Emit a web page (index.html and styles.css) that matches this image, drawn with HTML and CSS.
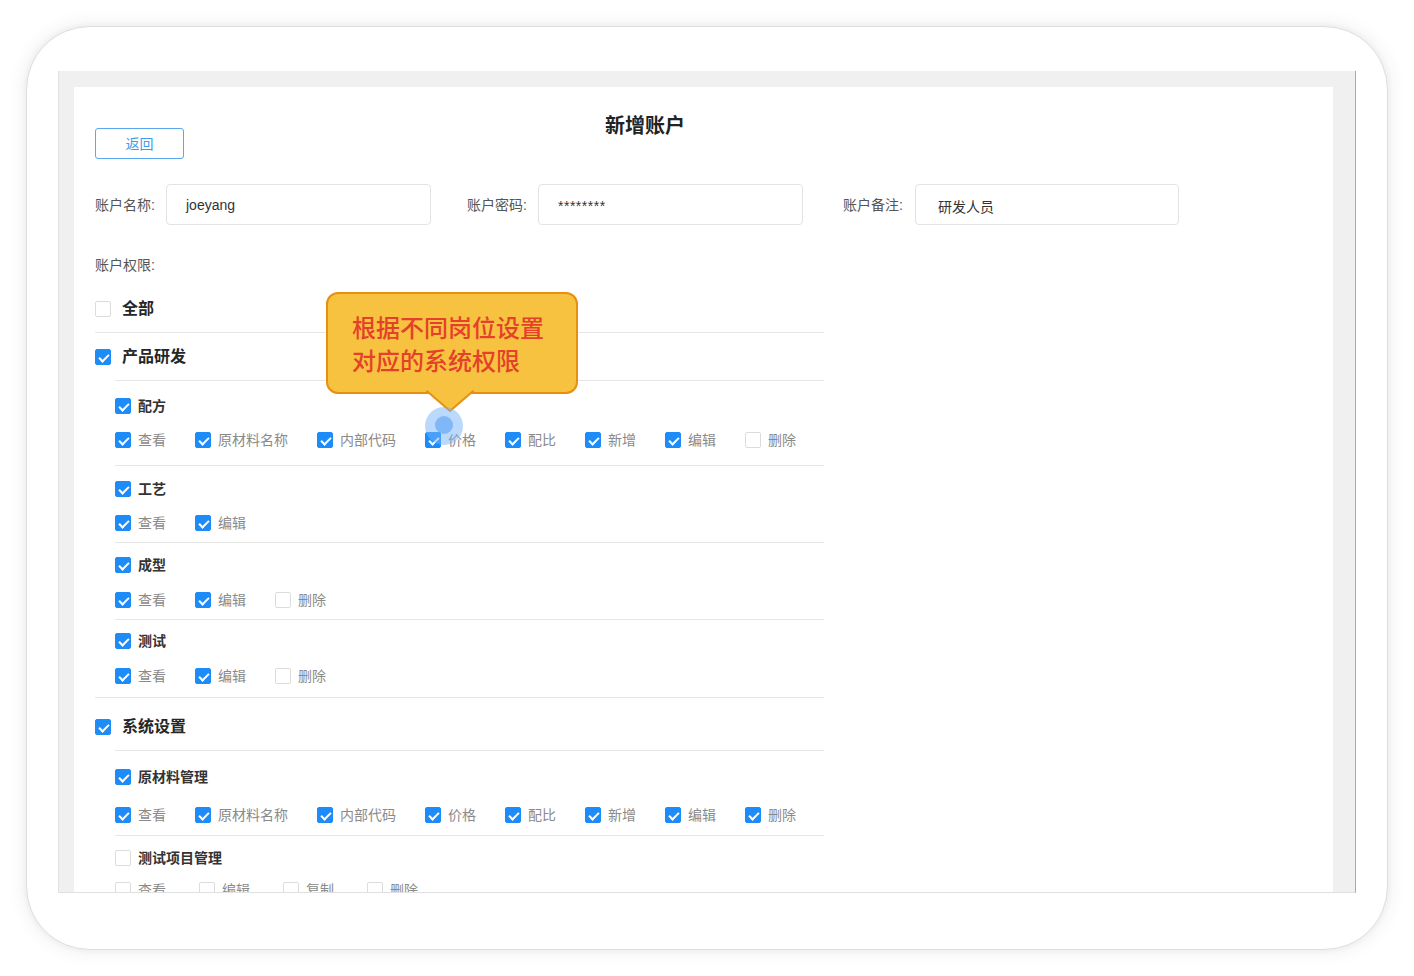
FILE: index.html
```html
<!DOCTYPE html>
<html lang="zh-CN">
<head>
<meta charset="utf-8">
<title>新增账户</title>
<link rel="stylesheet" href="styles.css">
</head>
<body>
<div class="device">
  <div class="screen">
    <div class="panel">
      <div class="head">
        <button class="btn-back">返回</button>
        <h1 class="title">新增账户</h1>
      </div>

      <div class="form">
        <div class="field"><label class="f-label">账户名称:</label><div class="input">joeyang</div></div>
        <div class="field f2"><label class="f-label">账户密码:</label><div class="input pwd">********</div></div>
        <div class="field f3"><label class="f-label">账户备注:</label><div class="input note">研发人员</div></div>
      </div>

      <div class="perm-label">账户权限:</div>

      <div class="perm">
        <div class="all-row">
          <span class="cb"></span><span class="lv1">全部</span>
          <div class="tip">根据不同岗位设置<br>对应的系统权限<svg class="tip-arrow" width="50" height="24" viewBox="0 0 50 24"><path d="M0 0 L25 21 L50 0 Z" fill="#f6c23f"/><path d="M1.5 0.8 L25 21 L48.5 0.8" fill="none" stroke="#e8900e" stroke-width="2" stroke-linejoin="round"/></svg></div>
          <span class="touch"><span class="touch-core"></span></span>
        </div>

        <div class="section">
          <div class="sec-head"><span class="cb on"></span><span class="lv1">产品研发</span></div>
          <div class="groups">
            <div class="group g-a">
              <div class="g-head"><span class="cb on"></span><span class="lv2">配方</span></div>
              <div class="opts">
                <span class="opt"><span class="cb on"></span>查看</span>
                <span class="opt"><span class="cb on"></span>原材料名称</span>
                <span class="opt"><span class="cb on"></span>内部代码</span>
                <span class="opt"><span class="cb on"></span>价格</span>
                <span class="opt"><span class="cb on"></span>配比</span>
                <span class="opt"><span class="cb on"></span>新增</span>
                <span class="opt"><span class="cb on"></span>编辑</span>
                <span class="opt"><span class="cb"></span>删除</span>
              </div>
            </div>
            <div class="group g-b">
              <div class="g-head"><span class="cb on"></span><span class="lv2">工艺</span></div>
              <div class="opts">
                <span class="opt"><span class="cb on"></span>查看</span>
                <span class="opt"><span class="cb on"></span>编辑</span>
              </div>
            </div>
            <div class="group g-c">
              <div class="g-head"><span class="cb on"></span><span class="lv2">成型</span></div>
              <div class="opts">
                <span class="opt"><span class="cb on"></span>查看</span>
                <span class="opt"><span class="cb on"></span>编辑</span>
                <span class="opt"><span class="cb"></span>删除</span>
              </div>
            </div>
            <div class="group g-d">
              <div class="g-head"><span class="cb on"></span><span class="lv2">测试</span></div>
              <div class="opts">
                <span class="opt"><span class="cb on"></span>查看</span>
                <span class="opt"><span class="cb on"></span>编辑</span>
                <span class="opt"><span class="cb"></span>删除</span>
              </div>
            </div>
          </div>
        </div>

        <div class="section sec-2">
          <div class="sec-head"><span class="cb on"></span><span class="lv1">系统设置</span></div>
          <div class="groups">
            <div class="group g-e">
              <div class="g-head"><span class="cb on"></span><span class="lv2">原材料管理</span></div>
              <div class="opts">
                <span class="opt"><span class="cb on"></span>查看</span>
                <span class="opt"><span class="cb on"></span>原材料名称</span>
                <span class="opt"><span class="cb on"></span>内部代码</span>
                <span class="opt"><span class="cb on"></span>价格</span>
                <span class="opt"><span class="cb on"></span>配比</span>
                <span class="opt"><span class="cb on"></span>新增</span>
                <span class="opt"><span class="cb on"></span>编辑</span>
                <span class="opt"><span class="cb on"></span>删除</span>
              </div>
            </div>
            <div class="group g-f">
              <div class="g-head"><span class="cb"></span><span class="lv2">测试项目管理</span></div>
              <div class="opts wide">
                <span class="opt"><span class="cb"></span>查看</span>
                <span class="opt"><span class="cb"></span>编辑</span>
                <span class="opt"><span class="cb"></span>复制</span>
                <span class="opt"><span class="cb"></span>删除</span>
              </div>
            </div>
          </div>
        </div>
      </div>
    </div>
  </div>
</div>
</body>
</html>
```

FILE: styles.css
```css
* { box-sizing: border-box; }

html, body {
  margin: 0;
  padding: 0;
  background: #fff;
}

body {
  width: 1414px;
  height: 976px;
  overflow: hidden;
  font-family: "Liberation Sans", "Noto Sans CJK SC", sans-serif;
  color: #333;
}

.device {
  margin: 26px 0 0 26px;
  width: 1362px;
  height: 924px;
  border: 1px solid #dedede;
  border-radius: 64px;
  background: #fff;
  box-shadow: 0 0 4px 2px rgba(0, 0, 0, 0.04), 0 0 14px 8px rgba(0, 0, 0, 0.035);
  padding: 44px 0 0 31px;
}

.screen {
  width: 1298px;
  height: 822px;
  background: #f0f0f0;
  border-left: 1px solid #e2e2e2;
  border-right: 1px solid #a9a9a9;
  border-bottom: 1px solid #e0e0e0;
  padding: 16px 22px 0 15px;
  overflow: hidden;
}

.panel {
  height: 100%;
  background: #fff;
  padding: 0 0 0 21px;
  overflow: hidden;
}

/* header */
.head {
  display: grid;
  grid-template-columns: 89px 922px 89px;
  align-items: start;
}

.btn-back {
  grid-column: 1;
  grid-row: 1;
  margin: 41px 0 0;
  width: 89px;
  height: 31px;
  padding: 0;
  background: #fff;
  border: 1px solid #5aa8ef;
  border-radius: 3px;
  color: #3f9bec;
  font-family: inherit;
  font-size: 14px;
  line-height: 20px;
}

.title {
  grid-column: 2;
  grid-row: 1;
  margin: 29px 0 0;
  font-size: 20px;
  line-height: 20px;
  font-weight: 600;
  color: #222;
  text-align: center;
}

/* form */
.form {
  display: flex;
  align-items: center;
  margin-top: 25px;
}

.field {
  display: flex;
  align-items: center;
}

.f2 { margin-left: 36px; }
.f3 { margin-left: 40px; }
.f3 .f-label { width: 72px; }

.f-label {
  width: 71px;
  font-size: 14px;
  line-height: 20px;
  color: #555;
  white-space: nowrap;
}

.input {
  width: 265px;
  height: 41px;
  border: 1px solid #e3e3e3;
  border-radius: 4px;
  padding: 0 0 0 19px;
  display: flex;
  align-items: center;
  font-size: 14px;
  color: #333;
}

.input.pwd { padding-top: 3px; letter-spacing: 0.5px; }
.input.note { width: 264px; padding-left: 22px; padding-top: 3px; }

.perm-label {
  margin-top: 30px;
  font-size: 14px;
  line-height: 20px;
  color: #555;
}

/* permission list */
.perm {
  width: 729px;
  margin-top: 10px;
}

.all-row {
  position: relative;
  display: flex;
  align-items: center;
  padding: 13px 0 12px;
  border-bottom: 1px solid #e6e6e6;
}

.section {
  border-bottom: 1px solid #e6e6e6;
}

.sec-head {
  display: flex;
  align-items: center;
  padding: 13px 0 12px;
}

.sec-2 .sec-head {
  padding: 18px 0 12px;
}

.lv1 {
  margin-left: 11px;
  font-size: 16px;
  line-height: 22px;
  font-weight: 700;
  color: #262626;
  white-space: nowrap;
}

.groups {
  margin-left: 20px;
}

.group {
  border-top: 1px solid #e6e6e6;
  padding: 11px 0 9px;
}

.g-head {
  display: flex;
  align-items: center;
  height: 22px;
}

.lv2 {
  margin-left: 7px;
  font-size: 14px;
  line-height: 22px;
  font-weight: 700;
  color: #333;
  white-space: nowrap;
}

.opts {
  display: flex;
  align-items: center;
  margin-top: 12px;
  height: 22px;
}

.g-a { padding: 14px 0 14px; }
.g-b { padding: 12px 0 8px; }
.g-c { padding: 11px 0 8px; }
.g-c .opts { margin-top: 13px; }
.g-d { padding: 10px 0 10px; }
.g-d .opts { margin-top: 13px; }
.g-e { padding: 15px 0 9px; }
.g-e .opts { margin-top: 16px; }
.g-f { padding: 11px 0 9px; }
.g-f .opts { margin-top: 10px; }

.opt {
  flex: none;
  display: flex;
  align-items: center;
  margin-right: 29px;
  font-size: 14px;
  line-height: 22px;
  color: #8a8a8a;
  white-space: nowrap;
}

.opt .cb { margin-right: 7px; }
.opts.wide .opt { margin-right: 33px; }

/* checkbox */
.cb {
  position: relative;
  flex: none;
  width: 16px;
  height: 16px;
  border: 1px solid #dcdcdc;
  border-radius: 2px;
  background: #fff;
}

.cb.on {
  background: #1d8cf8;
  border-color: #1d8cf8;
}

.cb.on::after {
  content: "";
  position: absolute;
  left: 4.5px;
  top: 2px;
  width: 4px;
  height: 8px;
  border-right: 2px solid #fff;
  border-bottom: 2px solid #fff;
  transform: rotate(45deg);
}

/* tooltip overlay */
.tip {
  position: absolute;
  left: 231px;
  top: 7px;
  z-index: 5;
  width: 252px;
  height: 102px;
  padding: 16px 0 0 24px;
  background: #f6c23f;
  border: 2px solid #e8900e;
  border-radius: 12px;
  font-family: "Noto Sans CJK SC", sans-serif;
  font-size: 24px;
  line-height: 33px;
  font-weight: 500;
  color: #e5402a;
  white-space: nowrap;
}

.tip-arrow {
  position: absolute;
  left: 97px;
  top: calc(100% - 2px);
  display: block;
}

.touch {
  position: absolute;
  left: 330px;
  top: 122px;
  z-index: 6;
  width: 38px;
  height: 38px;
  border-radius: 50%;
  background: rgba(120, 180, 250, 0.5);
  display: flex;
  align-items: center;
  justify-content: center;
}

.touch-core {
  width: 18px;
  height: 18px;
  margin-top: -2px;
  border-radius: 50%;
  background: rgba(80, 155, 240, 0.55);
}
```
